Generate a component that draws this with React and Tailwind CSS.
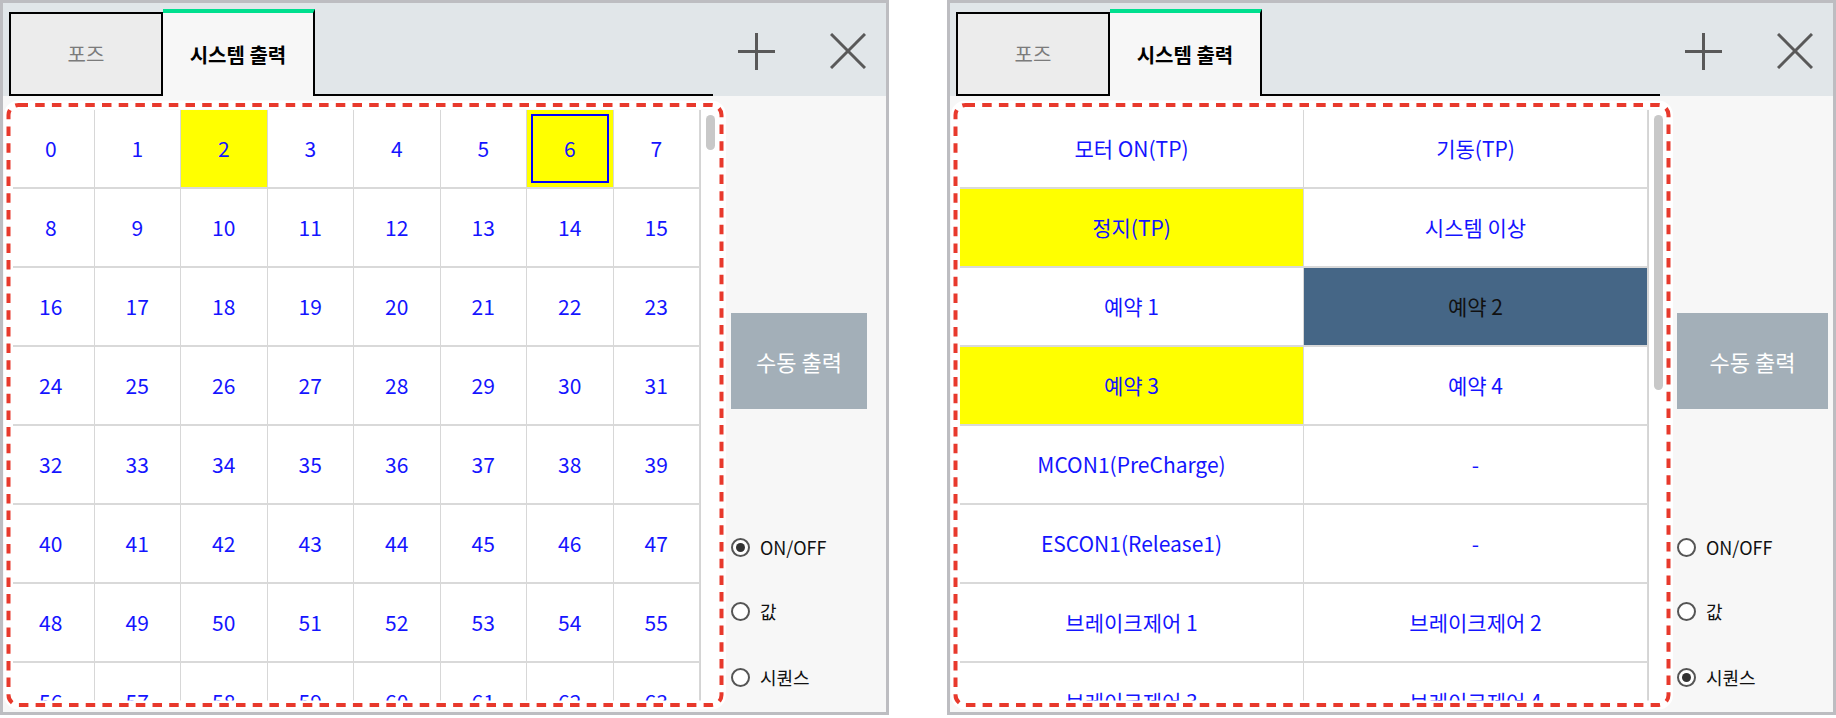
import React from "react";

const numberCells = Array.from({ length: 64 }, (_, i) => ({
  label: String(i),
  tone: i === 2 || i === 6 ? "yellow" : "plain",
  framed: i === 6,
}));

const systemCells = [
  { label: "모터 ON(TP)" },
  { label: "기동(TP)" },
  { label: "정지(TP)", tone: "yellow" },
  { label: "시스템 이상" },
  { label: "예약 1" },
  { label: "예약 2", tone: "dark" },
  { label: "예약 3", tone: "yellow" },
  { label: "예약 4" },
  { label: "MCON1(PreCharge)" },
  { label: "-" },
  { label: "ESCON1(Release1)" },
  { label: "-" },
  { label: "브레이크제어 1" },
  { label: "브레이크제어 2" },
  { label: "브레이크제어 3" },
  { label: "브레이크제어 4" },
];

function PlusIcon() {
  return (
    <svg width="37" height="37" viewBox="0 0 37 37" fill="none" stroke="#595959" strokeWidth="3">
      <line x1="18.5" y1="0" x2="18.5" y2="37" />
      <line x1="0" y1="18.5" x2="37" y2="18.5" />
    </svg>
  );
}

function CloseIcon() {
  return (
    <svg width="36" height="36" viewBox="0 0 36 36" fill="none" stroke="#595959" strokeWidth="3">
      <line x1="1" y1="1" x2="35" y2="35" />
      <line x1="35" y1="1" x2="1" y2="35" />
    </svg>
  );
}

function Radio({ label, checked, className = "" }) {
  return (
    <div className={`flex items-center gap-[10px] h-[20px] ${className}`}>
      <span className="w-[19px] h-[19px] rounded-full border-2 border-[#555] bg-white flex items-center justify-center">
        {checked && <span className="w-[9px] h-[9px] rounded-full bg-[#333]" />}
      </span>
      <span className="text-[18px] leading-none text-[#111]">{label}</span>
    </div>
  );
}

function Cell({ cell }) {
  const bg =
    cell.tone === "yellow" ? "bg-[#ffff00]" : cell.tone === "dark" ? "bg-[#456686]" : "bg-white";
  const color = cell.tone === "dark" ? "text-[#111]" : "text-[#1414ff]";
  return (
    <div className={`h-[79px] border-r border-b-2 border-r-[#d7d7d7] border-b-[#d9d9d9] p-[4px] ${bg}`}>
      <div
        className={`w-full h-full flex items-center justify-center ${
          cell.framed ? "border-2 border-[#0000ff]" : ""
        }`}
      >
        <span className={`text-[21px] whitespace-nowrap ${color}`}>{cell.label}</span>
      </div>
    </div>
  );
}

function Panel({ cells, cols, listClass, gridClass, thumbClass, buttonClass, paneClass, selected }) {
  return (
    <div className="relative w-[889px] h-[715px] shrink-0">
      <div className="w-full h-full border-[3px] border-[#bdbdc1] bg-[#f7f7f7] flex flex-col">
        {/* tab strip */}
        <div className="h-[93px] bg-[#e1e6e9] flex items-end pl-[6px]">
          <div className="w-[154px] h-[84px] border-2 border-black bg-[#ececec] flex items-center justify-center text-[20px] text-[#7b7b7b]">
            포즈
          </div>
          <div className="w-[152px] h-[87px] border-t-4 border-t-[#00df8f] border-r-2 border-r-black bg-[#f7f7f7] flex items-center justify-center text-[20px] font-bold text-black">
            시스템 출력
          </div>
          <div className="w-[398px] h-[2px] bg-black" />
          <div className="flex-1 self-stretch flex items-center pl-[25px] gap-[55px] pt-[3px]">
            <PlusIcon />
            <CloseIcon />
          </div>
        </div>

        <div className="flex-1 flex min-h-0">
          {/* io list */}
          <div className={`flex pt-[14px] pb-[8px] ${listClass}`}>
            <div className={`h-full overflow-hidden bg-white ${gridClass}`}>
              <div className={`grid ${cols}`}>
                {cells.map((cell, i) => (
                  <Cell key={i} cell={cell} />
                ))}
              </div>
            </div>
            <div className="w-[18px] h-full border-l border-[#d4d4d4] bg-white pl-[5px] pt-[5px]">
              <div className={`w-[9px] rounded-full bg-[#c8c8c8] ${thumbClass}`} />
            </div>
          </div>

          {/* side pane */}
          <div className={`flex-1 flex flex-col ${paneClass}`}>
            <div
              className={`mt-[217px] h-[96px] bg-[#a3afb8] flex items-center justify-center text-[22px] text-white ${buttonClass}`}
            >
              수동 출력
            </div>
            <Radio className="mt-[128px]" label="ON/OFF" checked={selected === "onoff"} />
            <Radio className="mt-[44px]" label="값" checked={selected === "value"} />
            <Radio className="mt-[46px]" label="시퀀스" checked={selected === "seq"} />
          </div>
        </div>
      </div>

      {/* red highlight frame */}
      <svg className="absolute top-0 left-0 pointer-events-none" width="889" height="715">
        <rect x="8.5" y="105" width="713" height="600" rx="10" fill="none" stroke="#ffffff" strokeWidth="9" />
        <rect
          x="8.5"
          y="105"
          width="713"
          height="600"
          rx="10"
          fill="none"
          stroke="#e8392c"
          strokeWidth="4"
          strokeDasharray="9.5 7.2"
        />
      </svg>
    </div>
  );
}

export default function App() {
  return (
    <div className="w-[1836px] h-[718px] bg-white flex gap-[58px] font-['Noto_Sans_CJK_KR','Noto_Sans',sans-serif]">
      <Panel
        cells={numberCells}
        cols="grid-cols-8"
        listClass="ml-[5px]"
        gridClass="w-[692px]"
        thumbClass="h-[35px]"
        buttonClass="w-[136px]"
        paneClass="pl-[13px]"
        selected="onoff"
      />
      <Panel
        cells={systemCells}
        cols="grid-cols-2"
        listClass="ml-[10px]"
        gridClass="w-[688px]"
        thumbClass="h-[275px]"
        buttonClass="w-[151px]"
        paneClass="pl-[11px]"
        selected="seq"
      />
    </div>
  );
}
